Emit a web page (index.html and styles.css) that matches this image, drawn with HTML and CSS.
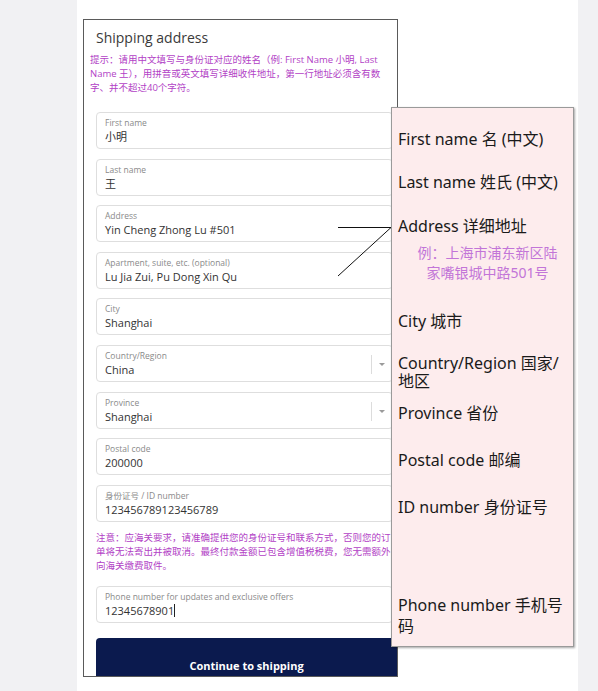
FILE: index.html
```html
<!DOCTYPE html>
<html lang="zh">
<head>
<meta charset="utf-8">
<title>Shipping address</title>
<link rel="stylesheet" href="styles.css">
</head>
<body>
<div class="sheet">
  <div class="form">
    <h2 class="title">Shipping address</h2>
    <p class="hint">提示：请用中文填写与身份证对应的姓名（例: First Name 小明, Last<br>Name 王），用拼音或英文填写详细收件地址，第一行地址必须含有数<br>字、并不超过40个字符。</p>
    <div class="fields">
      <div class="field"><div class="field-body"><div class="label">First name</div><div class="value">小明</div></div></div>
      <div class="field"><div class="field-body"><div class="label">Last name</div><div class="value">王</div></div></div>
      <div class="field"><div class="field-body"><div class="label">Address</div><div class="value">Yin Cheng Zhong Lu #501</div></div></div>
      <div class="field"><div class="field-body"><div class="label">Apartment, suite, etc. (optional)</div><div class="value">Lu Jia Zui, Pu Dong Xin Qu</div></div></div>
      <div class="field"><div class="field-body"><div class="label">City</div><div class="value">Shanghai</div></div></div>
      <div class="field select"><div class="field-body"><div class="label">Country/Region</div><div class="value">China</div></div><span class="sep"></span><span class="arrow"></span></div>
      <div class="field select"><div class="field-body"><div class="label">Province</div><div class="value">Shanghai</div></div><span class="sep"></span><span class="arrow"></span></div>
      <div class="field"><div class="field-body"><div class="label">Postal code</div><div class="value">200000</div></div></div>
      <div class="field"><div class="field-body"><div class="label">身份证号 / ID number</div><div class="value">123456789123456789</div></div></div>
    </div>
    <p class="note">注意：应海关要求，请准确提供您的身份证号和联系方式，否则您的订<br>单将无法寄出并被取消。最终付款金额已包含增值税税费，您无需额外<br>向海关缴费取件。</p>
    <div class="field phone"><div class="field-body"><div class="label">Phone number for updates and exclusive offers</div><div class="value">12345678901<span class="caret"></span></div></div></div>
    <div class="button">Continue to shipping</div>
  </div>

  <svg class="pointer" width="60" height="56" viewBox="0 0 60 56">
    <line x1="0" y1="5.5" x2="53" y2="5.5" stroke="#111" stroke-width="1"/>
    <line x1="0" y1="54" x2="53" y2="5.5" stroke="#111" stroke-width="1"/>
  </svg>

  <div class="panel">
    <div class="p-item p-first">First name 名 (中文)</div>
    <div class="p-item p-last">Last name 姓氏 (中文)</div>
    <div class="p-item p-addr">Address 详细地址</div>
    <div class="p-example">例：上海市浦东新区陆<br>家嘴银城中路501号</div>
    <div class="p-item p-city">City 城市</div>
    <div class="p-item p-country">Country/Region 国家/<br>地区</div>
    <div class="p-item p-prov">Province 省份</div>
    <div class="p-item p-postal">Postal code 邮编</div>
    <div class="p-item p-id">ID number 身份证号</div>
    <div class="p-item p-phone">Phone number 手机号<br>码</div>
  </div>
</div>
</body>
</html>
```
FILE: styles.css
```css
* { box-sizing: border-box; }
html, body { margin: 0; padding: 0; }
body {
  background: #f1f1f3;
  font-family: "Open Sans", "Noto Sans CJK SC", sans-serif;
  color: #333;
}
.sheet {
  position: relative;
  margin-left: 77px;
  width: 501px;
  height: 691px;
  background: #fff;
  padding-top: 19px;
}
.form {
  margin-left: 6px;
  width: 315px;
  height: 658px;
  border: 1.5px solid #5a5a5a;
  overflow: hidden;
  padding: 8px 0 0 12px;
}
.title {
  margin: 0;
  font-size: 14px;
  font-weight: 400;
  line-height: 20px;
  color: #3a3a3a;
}
.hint {
  margin: 5px 0 0 -6px;
  font-size: 9.5px;
  line-height: 14px;
  color: #b23fc6;
  white-space: nowrap;
}
.fields {
  margin-top: 17px;
  display: flex;
  flex-direction: column;
  gap: 9.6px;
}
.field {
  display: flex;
  height: 37px;
  margin-right: 4px;
  border: 1px solid #dedede;
  border-radius: 4px;
  padding: 4px 8px 0 8px;
  align-items: flex-start;
}
.field-body { flex: 1; }
.label {
  font-size: 8.5px;
  line-height: 11px;
  color: #8a8a8a;
  white-space: nowrap;
}
.value {
  font-size: 11px;
  line-height: 18px;
  color: #333;
  white-space: nowrap;
}
.select { padding-right: 0; align-items: center; padding-top: 0; }
.select .field-body { padding-top: 4px; align-self: flex-start; }
.sep {
  width: 1px;
  height: 19px;
  background: #dcdcdc;
  margin-top: 2px;
}
.arrow {
  width: 0;
  height: 0;
  margin: 2px 7px 0 7px;
  border-left: 3px solid transparent;
  border-right: 3px solid transparent;
  border-top: 3px solid #9a9a9a;
}
.caret {
  display: inline-block;
  width: 1px;
  height: 13px;
  background: #222;
  vertical-align: -2px;
}
.note {
  margin: 9px 0 0 0;
  font-size: 9.5px;
  line-height: 14px;
  color: #b23fc6;
  white-space: nowrap;
}
.phone { margin-top: 13px; }
.button {
  margin-top: 15px;
  height: 56px;
  background: #0b1a4e;
  border-radius: 4px;
  color: #fff;
  font-weight: 700;
  font-size: 11px;
  display: flex;
  align-items: center;
  justify-content: center;
}
.pointer {
  position: absolute;
  left: 261px;
  top: 222px;
}
.panel {
  position: absolute;
  left: 314px;
  top: 107px;
  width: 183px;
  height: 540px;
  background: #fdeced;
  border: 1px solid #9a9a9a;
  box-shadow: 1px 1px 2px rgba(0,0,0,0.35);
  padding: 21px 0 0 6px;
  font-family: "Noto Sans", "Noto Sans CJK SC", sans-serif;
  font-size: 16px;
  color: #1a1a1a;
}
.p-item { line-height: 20px; white-space: nowrap; }
.p-last { margin-top: 23px; }
.p-addr { margin-top: 24px; }
.p-example {
  margin-top: 7px;
  line-height: 20px;
  font-size: 14px;
  color: #c275d8;
  text-align: center;
  padding-left: 4px;
}
.p-city { margin-top: 28px; }
.p-country { margin-top: 23px; line-height: 18px; }
.p-prov { margin-top: 13px; }
.p-postal { margin-top: 27px; }
.p-id { margin-top: 27px; }
.p-phone { margin-top: 78px; line-height: 21px; }
```
